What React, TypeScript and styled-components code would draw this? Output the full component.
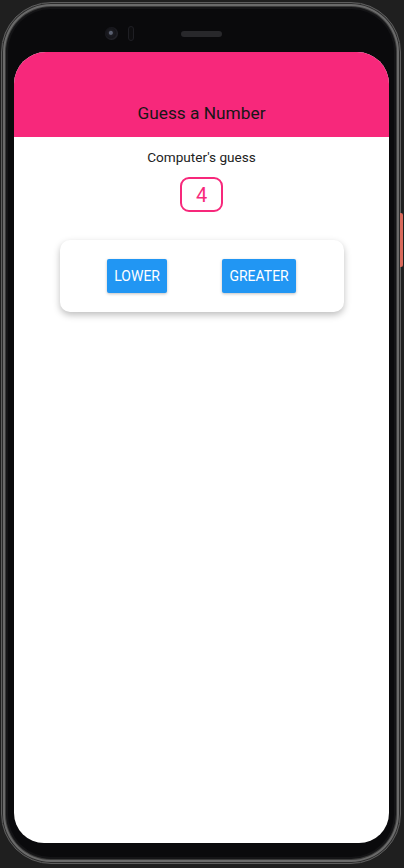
import React from "react";
import styled, { createGlobalStyle } from "styled-components";

const Global = createGlobalStyle`
  html, body { margin: 0; padding: 0; background: #1f1f1f; }
  body { font-family: Roboto, "Noto Sans", sans-serif; }
  * { box-sizing: border-box; }
`;

const Page = styled.div`
  width: 404px;
  height: 868px;
  padding: 2px 3px 0 1px;
  background: #1f1f1f;
`;

const Phone = styled.div`
  position: relative;
  width: 400px;
  height: 862px;
  border-radius: 50px;
  background: #0a0a0c;
  border: 1px solid #5e5e5e;
  box-shadow: inset 0 0 0 1px #2b2b2b, inset 0 0 0 3px #6a6a6a,
    inset 0 0 0 4px #3a3a3a, inset 0 0 0 6px #141416;
  display: flex;
  flex-direction: column;
  padding: 0 11px 0 12px;
`;

const PowerButton = styled.div`
  position: absolute;
  right: -3px;
  top: 210px;
  width: 3px;
  height: 54px;
  background: #d96a5c;
  border-radius: 0 2px 2px 0;
`;

const TopBezel = styled.div`
  height: 49px;
  display: flex;
  align-items: center;
  padding: 12px 0 0 91px;
`;

const Camera = styled.div`
  width: 13px;
  height: 13px;
  border-radius: 50%;
  background: radial-gradient(circle at 45% 45%, #5a6070 0 1.5px, #1c1c22 2.5px, #15151a 5px, #222228 6.5px);
`;

const Sensor = styled.div`
  margin-left: 10px;
  width: 6px;
  height: 15px;
  border-radius: 3px;
  border: 1px solid #1f1f24;
  background: #0e0e10;
`;

const Speaker = styled.div`
  margin-left: 47px;
  width: 41px;
  height: 6px;
  border-radius: 3px;
  background: #28282b;
`;

const Screen = styled.div`
  width: 375px;
  height: 791px;
  border-radius: 32px 32px 30px 30px;
  background: #ffffff;
  overflow: hidden;
  display: flex;
  flex-direction: column;
`;

const Header = styled.header`
  height: 85px;
  background: #f7287b;
  display: flex;
  align-items: flex-end;
  justify-content: center;
  padding-bottom: 13px;
`;

const Title = styled.h1`
  margin: 0;
  font-size: 17.3px;
  font-weight: 400;
  color: #161616;
  line-height: 22px;
`;

const Body = styled.main`
  display: flex;
  flex-direction: column;
  align-items: center;
  padding-top: 12px;
`;

const Label = styled.div`
  font-size: 13.6px;
  color: #222;
  line-height: 16px;
`;

const NumberBox = styled.div`
  margin-top: 12px;
  width: 43px;
  height: 35px;
  border: 2px solid #f7287b;
  border-radius: 9px;
  display: flex;
  align-items: center;
  justify-content: center;
  font-size: 20px;
  color: #f7287b;
`;

const Card = styled.div`
  margin-top: 28px;
  width: 284px;
  padding: 19px 20px;
  border-radius: 10px;
  background: #fff;
  box-shadow: 0 3px 7px rgba(0, 0, 0, 0.26);
  display: flex;
  justify-content: space-around;
`;

const Button = styled.button`
  height: 34px;
  padding: 0 7px;
  border: none;
  border-radius: 2px;
  background: #2196f3;
  color: #fff;
  font-family: Roboto, sans-serif;
  font-size: 14px;
  text-transform: uppercase;
  box-shadow: 0 1px 3px rgba(0, 0, 0, 0.25);
`;

export default function App() {
  return (
    <>
      <Global />
      <Page>
        <Phone>
          <PowerButton />
          <TopBezel>
            <Camera />
            <Sensor />
            <Speaker />
          </TopBezel>
          <Screen>
            <Header>
              <Title>Guess a Number</Title>
            </Header>
            <Body>
              <Label>Computer's guess</Label>
              <NumberBox>4</NumberBox>
              <Card>
                <Button>Lower</Button>
                <Button>Greater</Button>
              </Card>
            </Body>
          </Screen>
        </Phone>
      </Page>
    </>
  );
}
